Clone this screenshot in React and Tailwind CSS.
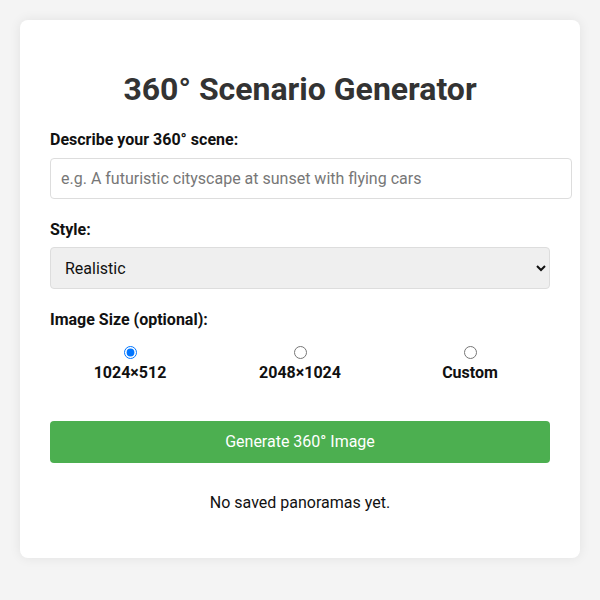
import React, { useState } from 'react';

const sizes = ['1024×512', '2048×1024', 'Custom'];

const App = () => {
  const [prompt, setPrompt] = useState('');
  const [style, setStyle] = useState('realistic');
  const [size, setSize] = useState('1024×512');

  return (
    <div className="min-h-[600px] bg-[#f4f4f4] p-5 font-['Roboto',sans-serif] text-[#111]">
      <div className="bg-white rounded-[8px] shadow-[0_0_12px_rgba(0,0,0,0.08)] px-[30px] pt-[51px] pb-[30px]">
        <h1 className="text-[32px] leading-[37.5px] font-bold text-[#333] text-center mb-[21.5px]">
          360° Scenario Generator
        </h1>

        <label className="block text-base leading-[19px] font-bold mb-[9px]">Describe your 360° scene:</label>
        <input
          type="text"
          value={prompt}
          onChange={(e) => setPrompt(e.target.value)}
          placeholder="e.g. A futuristic cityscape at sunset with flying cars"
          className="box-content w-full p-[10px] text-base leading-[19px] border border-[#ddd] rounded-[4px] placeholder:text-[#777] outline-none"
        />

        <label className="block text-base leading-[19px] font-bold mt-[21px] mb-[8px]">Style:</label>
        <select
          value={style}
          onChange={(e) => setStyle(e.target.value)}
          className="block w-full h-[42px] px-[10px] text-base bg-[#efefef] border border-[#ddd] rounded-[4px] outline-none"
        >
          <option value="realistic">Realistic</option>
          <option value="cartoon">Cartoon</option>
          <option value="fantasy">Fantasy</option>
        </select>

        <label className="block text-base leading-[19px] font-bold mt-[21px]">Image Size (optional):</label>
        <div className="flex justify-center mt-[17px]">
          {sizes.map((s) => (
            <label key={s} className="w-[170px] shrink-0 flex flex-col items-center cursor-pointer">
              <input
                type="radio"
                name="size"
                checked={size === s}
                onChange={() => setSize(s)}
                className="w-[13px] h-[13px] mb-[4px]"
              />
              <span className="text-base leading-[19px] font-bold">{s}</span>
            </label>
          ))}
        </div>

        <button className="w-full h-[42px] mt-[39px] bg-[#4caf50] text-white text-base rounded-[4px] cursor-pointer">
          Generate 360° Image
        </button>

        <p className="text-center text-base leading-[19px] mt-[30px] mb-[16px]">No saved panoramas yet.</p>
      </div>
    </div>
  );
};

export default App;
